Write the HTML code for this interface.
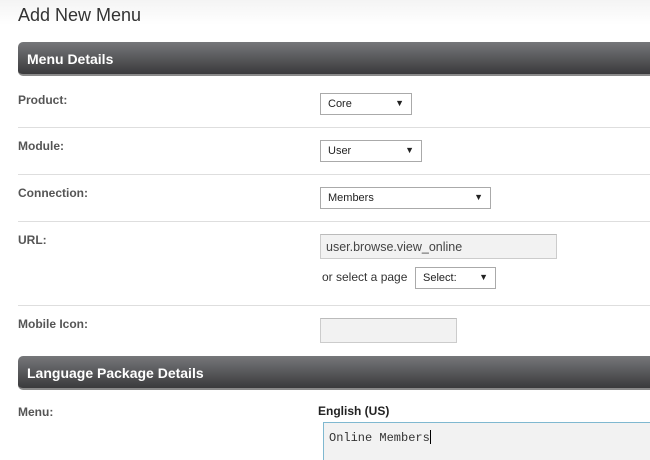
<!DOCTYPE html>
<html style="overflow:hidden;height:460px"><head><style>
body{margin:0;width:650px;height:460px;overflow:hidden;background:linear-gradient(#f4f4f4,#fff 25px);font-family:"Liberation Sans",Arial,sans-serif;position:relative}
div,span{position:absolute;box-sizing:border-box}
.t{left:18px;top:5px;font-size:18px;color:#333}
.bar{left:18px;width:632px;height:34px;border-radius:5px 0 0 5px;background:linear-gradient(#76777a,#3a3a3c);border-bottom:2px solid #8a8a8a;color:#fff;font-weight:bold;font-size:14px;padding:9px 0 0 9px}
.lb{left:18px;font-size:12px;font-weight:bold;color:#555}
.hr{left:18px;width:632px;height:1px;background:#dedede}
.sel{left:320px;height:22px;border:1px solid #aaa;background:#fff;font-size:11px;color:#222;padding:4px 0 0 7px}
.sel:after{content:"▼";position:absolute;right:7px;top:4px;font-size:9px}
.inp{height:25px;background:#f2f2f2;border:1px solid #ccc;border-top-color:#bbb}
</style></head><body>
<div class="t">Add New Menu</div>
<div class="bar" style="top:42px">Menu Details</div>
<div class="lb" style="top:93px">Product:</div>
<div class="sel" style="top:93px;width:92px">Core</div>
<div class="hr" style="top:127px"></div>
<div class="lb" style="top:139px">Module:</div>
<div class="sel" style="top:140px;width:102px">User</div>
<div class="hr" style="top:174px"></div>
<div class="lb" style="top:186px">Connection:</div>
<div class="sel" style="top:187px;width:171px">Members</div>
<div class="hr" style="top:221px"></div>
<div class="lb" style="top:233px">URL:</div>
<div class="inp" style="left:320px;top:234px;width:237px;font-size:12.5px;color:#444;padding:5px 0 0 5px">user.browse.view_online</div>
<div style="left:322px;top:270px;font-size:12px;color:#333">or select a page</div>
<div class="sel" style="left:415px;top:267px;width:81px">Select:</div>
<div class="hr" style="top:305px"></div>
<div class="lb" style="top:317px">Mobile Icon:</div>
<div class="inp" style="left:320px;top:318px;width:137px"></div>
<div class="bar" style="top:356px">Language Package Details</div>
<div class="lb" style="top:405px">Menu:</div>
<div style="left:318px;top:404px;font-size:12px;font-weight:bold;color:#222">English (US)</div>
<div style="left:323px;top:422px;width:327px;height:38px;background:#f2f2f2;border:1px solid #7fb8d0;border-right:none;border-bottom:none;font-family:'Liberation Mono',monospace;font-size:12px;color:#333;padding:7px 0 0 5px">Online Members<span style="position:relative;display:inline-block;width:1px;height:14px;background:#000;vertical-align:-3px"></span></div>
</body></html>
